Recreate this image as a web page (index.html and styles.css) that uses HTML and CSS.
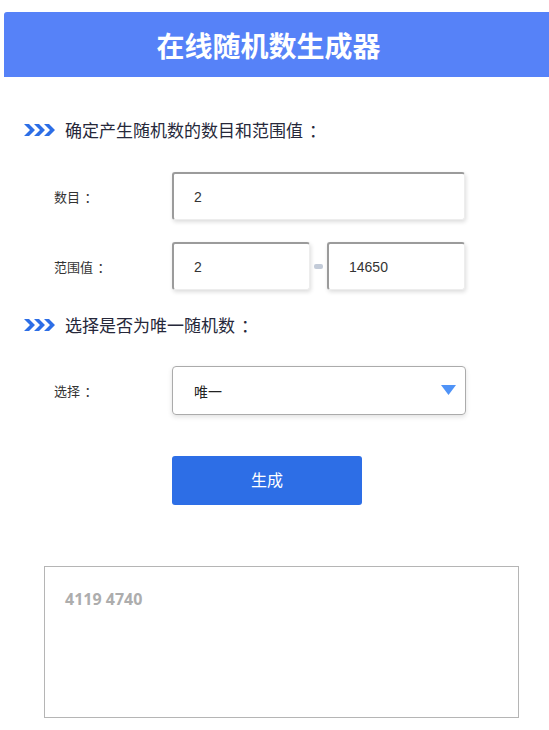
FILE: index.html
```html
<!DOCTYPE html>
<html lang="zh-CN">
<head>
<meta charset="utf-8">
<title>在线随机数生成器</title>
<link rel="stylesheet" href="styles.css">
</head>
<body>
<header class="banner"><h1 class="banner-title">在线随机数生成器</h1></header>
<main class="form">
  <h2 class="section-title">
    <svg class="chevrons" width="31" height="12" viewBox="0 0 31 12"><path d="M0 0h5l6 6-6 6H0l6-6z M10 0h5l6 6-6 6h-5l6-6z M20 0h5l6 6-6 6h-5l6-6z" fill="#2d6ee6"/></svg>
    <span>确定产生随机数的数目和范围值<span class="colon">：</span></span>
  </h2>
  <div class="row row-first">
    <label class="label">数目<span class="colon">：</span></label>
    <input class="field field-wide" type="text" value="2">
  </div>
  <div class="row row-second">
    <label class="label">范围值<span class="colon">：</span></label>
    <div class="range">
      <input class="field field-half" type="text" value="2">
      <span class="dash"></span>
      <input class="field field-half" type="text" value="14650">
    </div>
  </div>
  <h2 class="section-title section-second">
    <svg class="chevrons" width="31" height="12" viewBox="0 0 31 12"><path d="M0 0h5l6 6-6 6H0l6-6z M10 0h5l6 6-6 6h-5l6-6z M20 0h5l6 6-6 6h-5l6-6z" fill="#2d6ee6"/></svg>
    <span>选择是否为唯一随机数<span class="colon">：</span></span>
  </h2>
  <div class="row row-select">
    <label class="label">选择<span class="colon">：</span></label>
    <div class="select">
      <span>唯一</span>
      <svg class="caret" width="15" height="10" viewBox="0 0 15 10"><path d="M0 0h15L7.5 10z" fill="#4f93f7"/></svg>
    </div>
  </div>
  <div class="actions"><button class="btn" type="button">生成</button></div>
  <div class="result">4119 4740</div>
</main>
</body>
</html>
```
FILE: styles.css
```css
html, body {
  margin: 0;
  padding: 0;
  background: #fff;
}
body {
  font-family: "Liberation Sans", "Noto Sans CJK SC", sans-serif;
  color: #333;
}
.banner {
  margin: 12px 0 0 4px;
  height: 65px;
  background: #5682f8;
  border-top-left-radius: 3px;
  display: flex;
  align-items: center;
  justify-content: center;
  padding-right: 16px;
}
.banner-title {
  margin: 0;
  font-family: "Noto Sans CJK SC", sans-serif;
  font-size: 28px;
  font-weight: 700;
  color: #fff;
  line-height: 38px;
}
.form {
  display: flex;
  flex-direction: column;
}
.colon {
  display: inline-block;
  padding-left: 0.35em;
  margin-right: -0.35em;
}
.section-title {
  margin: 41px 0 0 24px;
  display: flex;
  align-items: center;
  gap: 10px;
  font-family: "Noto Sans CJK SC", sans-serif;
  font-weight: 400;
  font-size: 17px;
  line-height: 24px;
  color: #26283a;
}
.section-second {
  margin-top: 23px;
}
.row {
  display: flex;
  align-items: center;
  margin-left: 54px;
}
.row-first { margin-top: 30px; }
.row-second { margin-top: 22px; }
.row-select { margin-top: 29px; }
.label {
  width: 118px;
  font-family: "Noto Sans CJK SC", sans-serif;
  font-size: 13px;
  color: #333;
}
.field {
  box-sizing: border-box;
  height: 48px;
  margin: 0;
  padding: 0 0 0 20px;
  border-top: 2px solid #9b9b9b;
  border-left: 2px solid #9b9b9b;
  border-right: 1px solid #ededed;
  border-bottom: 1px solid #ededed;
  border-radius: 3px;
  box-shadow: 1px 2px 4px rgba(0, 0, 0, 0.14);
  font-family: "Liberation Sans", sans-serif;
  font-size: 14px;
  color: #333;
  background: #fff;
  outline: none;
}
.field-wide { width: 293px; }
.field-half { width: 138px; }
.range {
  display: flex;
  align-items: center;
}
.dash {
  width: 9px;
  height: 5px;
  margin: 0 4px;
  border-radius: 2px;
  background: #c3cbd8;
}
.select {
  box-sizing: border-box;
  width: 294px;
  height: 49px;
  border: 1px solid #ababab;
  border-radius: 4px;
  box-shadow: 0 2px 5px rgba(0, 0, 0, 0.12);
  display: flex;
  align-items: center;
  justify-content: space-between;
  padding: 0 9px 0 21px;
  font-family: "Noto Sans CJK SC", sans-serif;
  font-size: 14px;
  color: #222;
}
.caret { margin-top: -2px; }
.actions {
  margin: 41px 0 0 172px;
}
.btn {
  width: 190px;
  height: 49px;
  border: 0;
  border-radius: 3px;
  background: #2d6ee6;
  color: #fff;
  font-family: "Noto Sans CJK SC", sans-serif;
  font-size: 16px;
  line-height: 20px;
  padding: 0 0 4px;
}
.result {
  box-sizing: border-box;
  margin: 61px 0 13px 44px;
  width: 475px;
  height: 152px;
  border: 1px solid #b5b5b5;
  padding: 21px 20px;
  font-family: "Open Sans", sans-serif;
  font-weight: 700;
  font-size: 16px;
  line-height: 22px;
  color: #adadad;
}
```
